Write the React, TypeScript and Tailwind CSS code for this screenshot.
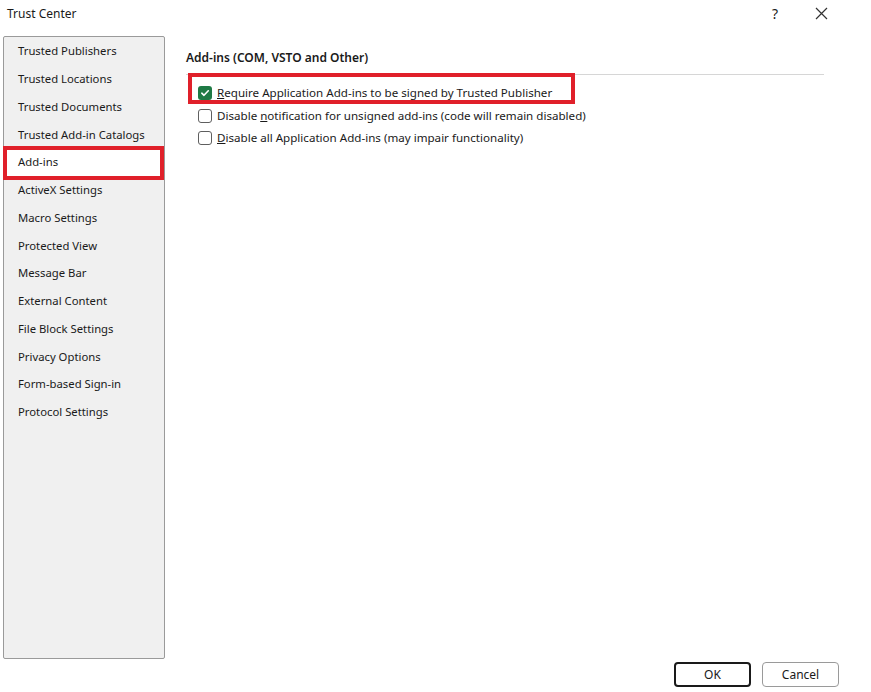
import React from 'react'

const navItems = [
    'Trusted Publishers',
    'Trusted Locations',
    'Trusted Documents',
    'Trusted Add-in Catalogs',
    'Add-ins',
    'ActiveX Settings',
    'Macro Settings',
    'Protected View',
    'Message Bar',
    'External Content',
    'File Block Settings',
    'Privacy Options',
    'Form-based Sign-in',
    'Protocol Settings',
]

const Check = ({ checked }: { checked?: boolean }) =>
    checked ? (
        <span className="w-[14px] h-[14px] rounded-[3px] bg-[#1f7a45] flex items-center justify-center shrink-0">
            <svg width="10" height="10" viewBox="0 0 10 10">
                <path d="M1.8 5.2 L4 7.3 L8.3 2.8" stroke="white" strokeWidth="1.6" fill="none" strokeLinecap="round" strokeLinejoin="round" />
            </svg>
        </span>
    ) : (
        <span className="w-[14px] h-[14px] rounded-[3px] border border-[#5f5f5f] bg-white shrink-0" />
    )

const App = () => {
    return (
        <div className="w-[871px] h-[692px] bg-white text-[#1a1a1a] flex flex-col" style={{ fontFamily: '"Noto Sans", "Open Sans", sans-serif' }}>
            {/* title bar */}
            <div className="h-[26px] flex items-center text-[12px]">
                <span className="ml-[7px] mt-[1px]">Trust Center</span>
                <span className="ml-auto mr-[37px] text-[14px]">?</span>
                <svg className="mr-[43px]" width="13" height="13" viewBox="0 0 13 13">
                    <path d="M1 1 L12 12 M12 1 L1 12" stroke="#333" strokeWidth="1.2" />
                </svg>
            </div>

            <div className="flex flex-1">
                {/* sidebar */}
                <div className="ml-[3px] mt-[10px] w-[162px] h-[623px] bg-[#f0f0f0] border border-[#9a9a9a] rounded-[2px] pt-[1px]">
                    {navItems.map((item) => (
                        <div key={item} className="relative h-[27.75px] flex items-center pl-[14px] text-[11.3px]">
                            {item === 'Add-ins' && (
                                <div className="absolute -left-[1px] right-0 -top-[3px] -bottom-[3px] border-[4px] border-[#e0202a] bg-white" />
                            )}
                            <span className="relative">{item}</span>
                        </div>
                    ))}
                </div>

                {/* content */}
                <div className="flex-1 ml-[21px] mt-[24px] mr-[47px]">
                    <div className="text-[12px] font-semibold h-[16px] leading-[16px]">Add-ins (COM, VSTO and Other)</div>
                    <div className="mt-[8px] border-t border-[#d6d6d6]" />
                    <div className="mt-[7px] ml-[12px] flex flex-col text-[11.6px]">
                        <div className="relative h-[22px] flex items-center">
                            <div className="absolute -left-[10px] w-[387px] -top-[9px] bottom-0 border-[4px] border-[#e0202a]" />
                            <Check checked />
                            <span className="ml-[5px]"><u>R</u>equire Application Add-ins to be signed by Trusted Publisher</span>
                        </div>
                        <div className="h-[23px] flex items-center">
                            <Check />
                            <span className="ml-[5px]">Disable <u>n</u>otification for unsigned add-ins (code will remain disabled)</span>
                        </div>
                        <div className="h-[22px] flex items-center">
                            <Check />
                            <span className="ml-[5px]"><u>D</u>isable all Application Add-ins (may impair functionality)</span>
                        </div>
                    </div>
                </div>
            </div>

            {/* footer */}
            <div className="h-[33px] flex items-start justify-end gap-[11px] pr-[32px] pt-[3px]">
                <button className="w-[77px] h-[25px] border-2 border-[#1a1a1a] rounded-[4px] text-[12px] bg-white">OK</button>
                <button className="w-[77px] h-[25px] border border-[#9a9a9a] rounded-[4px] text-[12px] bg-white">Cancel</button>
            </div>
        </div>
    )
}

export default App
